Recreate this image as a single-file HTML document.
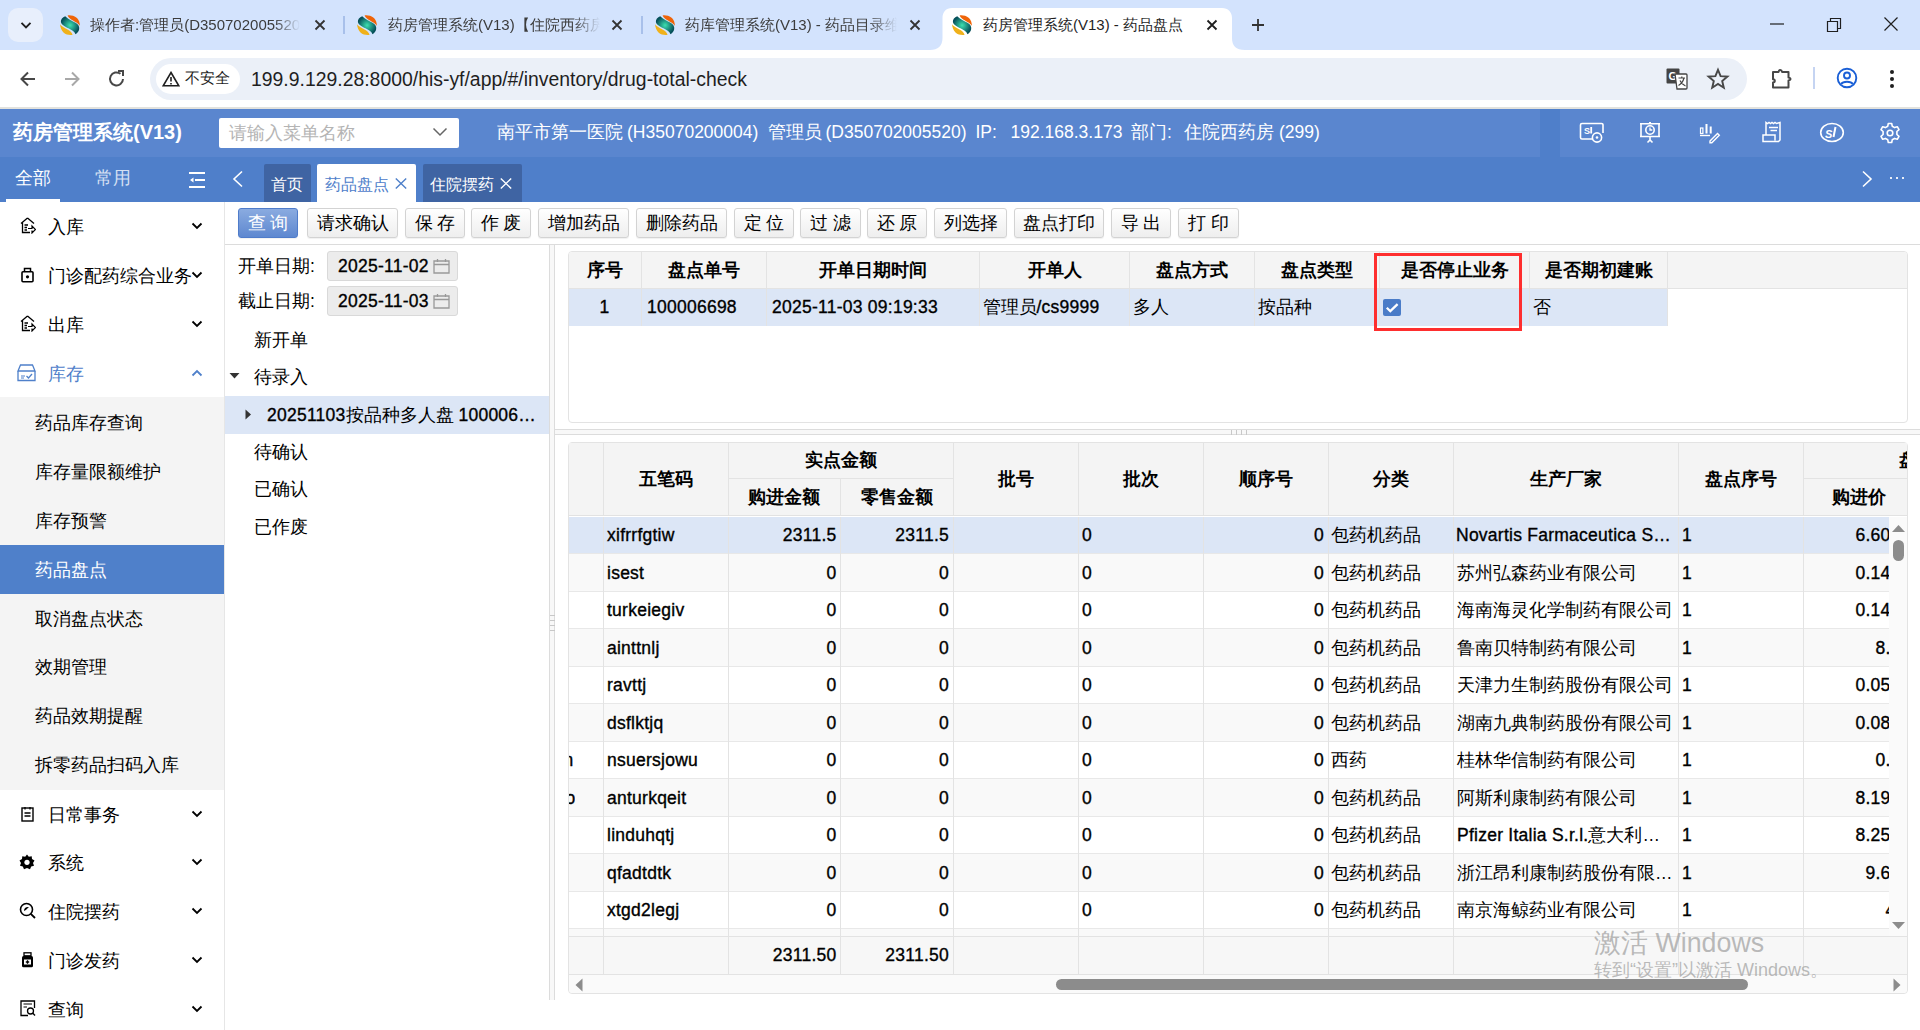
<!DOCTYPE html>
<html><head><meta charset="utf-8">
<style>
*{box-sizing:border-box;margin:0;padding:0}
html,body{width:1920px;height:1030px;overflow:hidden;background:#fff;font-family:"Liberation Sans",sans-serif;color:#000}
.abs{position:absolute}
/* chrome */
#tabstrip{left:0;top:0;width:1920px;height:50px;background:#d3e3fd}
#toolbar{left:0;top:50px;width:1920px;height:57px;background:#fff}
#tbline{left:0;top:107px;width:1920px;height:2px;background:#e2e2de}
#omni{left:150px;top:58px;width:1597px;height:42px;border-radius:21px;background:#ebf0f8}
/* app header */
#apphdr{left:0;top:109px;width:1920px;height:48px;background:#5a86cf}
#navstrip{left:0;top:157px;width:1920px;height:45px;background:#4f7fca}
#sidebar{left:0;top:202px;width:225px;height:828px;background:#fff;border-right:1px solid #e6e6e6}
#main{left:225px;top:202px;width:1695px;height:828px;background:#fff}

.ctab{position:absolute;top:15px;height:20px;font-size:15px;line-height:20px;color:#3c3c3c;white-space:nowrap;overflow:hidden;-webkit-mask-image:linear-gradient(90deg,#000 calc(100% - 26px),transparent 100%)}

.ntab{position:absolute;top:164px;height:38px;font-size:16.25px;line-height:40px;padding-left:7px;white-space:nowrap;border-radius:2px 2px 0 0}
.nx{font-size:19px;margin-left:2px}

.smi{position:absolute;margin-top:1px;left:48px;font-size:17.5px;line-height:22px;white-space:nowrap}
.ssub{position:absolute;margin-top:1px;left:35px;font-size:17.5px;line-height:22px;white-space:nowrap}

.btn{position:absolute;top:208px;height:30px;border:1px solid #d3d3d3;border-radius:3px;background:linear-gradient(#fff,#eeeeee);font-size:17.5px;line-height:28px;text-align:center;color:#000;white-space:pre;box-shadow:0 1px 1px rgba(0,0,0,0.06)}
.btn.pri{background:linear-gradient(#8aabe0,#5e88d0);border-color:#4f7cca;color:#fff}
.lbl{position:absolute;font-size:17.5px;line-height:22px;white-space:nowrap}
.dbox{position:absolute;left:327px;width:131px;height:30px;background:#ececec;border:1px solid #d9d9d9;border-radius:3px;font-size:17.5px;line-height:28px;padding-left:10px;white-space:nowrap}
.tr{position:absolute;font-size:17.5px;line-height:22px;white-space:nowrap}

.th{position:absolute;font-size:17.5px;font-weight:bold;text-align:center;white-space:nowrap;overflow:hidden}
.td{position:absolute;font-size:17.5px;white-space:nowrap;overflow:hidden;padding:0 4px}
.hdt{position:absolute;top:121px;font-size:17.5px;line-height:22px;color:#fff;white-space:nowrap}

.b{-webkit-text-stroke:0.35px currentColor;letter-spacing:0.25px}
</style></head><body>
<div id="tabstrip" class="abs"></div>
<div id="toolbar" class="abs"></div>
<div id="omni" class="abs"></div>
<div id="tbline" class="abs"></div>
<svg width="0" height="0" style="position:absolute">
<defs>
<radialGradient id="fg" cx="0.5" cy="0.5" r="0.5"><stop offset="0" stop-color="#3de0b0"/><stop offset="1" stop-color="#06505a"/></radialGradient>
<symbol id="fav" viewBox="0 0 20 20">
<path d="M5.2 1.3 C8 4.5 12.5 6 15.5 7.8 C18.3 9.5 19.6 11.5 19.2 14 C18.8 16.5 17.5 18 15.5 19.3 C14.5 16.5 11.5 14.8 8.5 13.3 C5 11.5 1.5 10 0.9 7 C0.6 4.5 2.5 2.5 5.2 1.3Z" fill="url(#fg)"/>
<path d="M7.6 0.4 C10 0 14 0.5 17 3 C19 5 19.9 8 19.9 10.8 C18.5 8.5 15.5 7 13 5.5 C10.5 4 8.5 2.5 7.6 0.4Z" fill="#ef6408"/>
<path d="M0.1 9.3 C1.5 11.5 4.5 13 7.5 14.5 C10 15.8 12 17.5 12.6 19.8 C10 20.3 6 19.8 3.5 17.5 C1.5 15.5 0.2 12.5 0.1 9.3Z" fill="#f0b11a"/>
</symbol>
</defs></svg>
<div class="abs" style="left:8px;top:8px;width:35px;height:34px;border-radius:10px;background:#e8effc"></div>
<svg class="abs" style="left:19px;top:18px" width="14" height="14" viewBox="0 0 14 14"><path d="M2.5 4.8 L7 9.3 L11.5 4.8" fill="none" stroke="#1f1f1f" stroke-width="1.9"/></svg>
<svg class="abs" style="left:60px;top:15px" width="20" height="20"><use href="#fav"/></svg>
<div class="abs ctab" style="left:90px;width:210px">操作者:管理员(D350702005520)</div>
<svg class="abs" style="left:314px;top:19px" width="12" height="12" viewBox="0 0 12 12"><path d="M1.5 1.5 L10.5 10.5 M10.5 1.5 L1.5 10.5" stroke="#333" stroke-width="1.8"/></svg>
<div class="abs" style="left:343px;top:16px;width:2px;height:18px;background:#a8c0ea"></div>
<svg class="abs" style="left:357px;top:15px" width="20" height="20"><use href="#fav"/></svg>
<div class="abs ctab" style="left:388px;width:212px">药房管理系统(V13)【住院西药房】</div>
<svg class="abs" style="left:611px;top:19px" width="12" height="12" viewBox="0 0 12 12"><path d="M1.5 1.5 L10.5 10.5 M10.5 1.5 L1.5 10.5" stroke="#333" stroke-width="1.8"/></svg>
<div class="abs" style="left:641px;top:16px;width:2px;height:18px;background:#a8c0ea"></div>
<svg class="abs" style="left:655px;top:15px" width="20" height="20"><use href="#fav"/></svg>
<div class="abs ctab" style="left:685px;width:212px">药库管理系统(V13) - 药品目录维护</div>
<svg class="abs" style="left:909px;top:19px" width="12" height="12" viewBox="0 0 12 12"><path d="M1.5 1.5 L10.5 10.5 M10.5 1.5 L1.5 10.5" stroke="#333" stroke-width="1.8"/></svg>
<svg class="abs" style="left:930px;top:8px" width="315" height="43" viewBox="0 0 315 43"><path d="M0 42 C8 42 12.5 38 12.5 30 L12.5 10 C12.5 4 16 0 22 0 L292 0 C298 0 302 4 302 10 L302 30 C302 38 306 42 315 42 L315 43 L0 43Z" fill="#fff"/></svg>
<svg class="abs" style="left:952px;top:15px" width="20" height="20"><use href="#fav"/></svg>
<div class="abs ctab" style="left:983px;width:215px;color:#1f1f1f;-webkit-mask-image:none">药房管理系统(V13) - 药品盘点</div>
<svg class="abs" style="left:1206px;top:19px" width="12" height="12" viewBox="0 0 12 12"><path d="M1.5 1.5 L10.5 10.5 M10.5 1.5 L1.5 10.5" stroke="#1f1f1f" stroke-width="1.8"/></svg>
<svg class="abs" style="left:1251px;top:18px" width="14" height="14" viewBox="0 0 14 14"><path d="M7 1 V13 M1 7 H13" stroke="#333" stroke-width="1.8"/></svg>
<svg class="abs" style="left:1769px;top:16px" width="16" height="16" viewBox="0 0 16 16"><path d="M1 8 H15" stroke="#1f1f1f" stroke-width="1.2"/></svg>
<svg class="abs" style="left:1826px;top:17px" width="16" height="16" viewBox="0 0 16 16"><path d="M1.5 4.5 H11.5 V14.5 H1.5Z M4.5 4.5 V1.5 H14.5 V11.5 H11.5" fill="none" stroke="#1f1f1f" stroke-width="1.2"/></svg>
<svg class="abs" style="left:1883px;top:16px" width="16" height="16" viewBox="0 0 16 16"><path d="M1.5 1.5 L14.5 14.5 M14.5 1.5 L1.5 14.5" stroke="#1f1f1f" stroke-width="1.2"/></svg>
<!-- toolbar -->
<svg class="abs" style="left:18px;top:69px" width="20" height="20" viewBox="0 0 20 20"><path d="M17 10 H4 M10 3.5 L3.5 10 L10 16.5" fill="none" stroke="#474747" stroke-width="2"/></svg>
<svg class="abs" style="left:62px;top:69px" width="20" height="20" viewBox="0 0 20 20"><path d="M3 10 H16 M10 3.5 L16.5 10 L10 16.5" fill="none" stroke="#a8a8a8" stroke-width="2"/></svg>
<svg class="abs" style="left:107px;top:69px" width="20" height="20" viewBox="0 0 20 20"><path d="M16 10 A6.5 6.5 0 1 1 13.5 4.8" fill="none" stroke="#474747" stroke-width="2"/><path d="M11 2 H16 V7" fill="none" stroke="#474747" stroke-width="2"/></svg>
<div class="abs" style="left:156px;top:64px;width:84px;height:30px;border-radius:15px;background:#fff"></div>
<svg class="abs" style="left:162px;top:71px" width="18" height="16" viewBox="0 0 18 16"><path d="M9 1.5 L16.8 14.8 H1.2Z" fill="none" stroke="#1f1f1f" stroke-width="1.6" stroke-linejoin="miter"/><path d="M9 6 V10.5 M9 12 V13.5" stroke="#1f1f1f" stroke-width="1.6"/></svg>
<div class="abs" style="left:185px;top:68px;font-size:15px;line-height:20px;color:#1f1f1f">不安全</div>
<div class="abs" style="left:251px;top:66px;font-size:19.4px;line-height:26px;color:#1f1f1f;letter-spacing:0px">199.9.129.28:8000/his-yf/app/#/inventory/drug-total-check</div>
<svg class="abs" style="left:1665px;top:67px" width="24" height="24" viewBox="0 0 24 24"><rect x="1.5" y="1.5" width="13" height="15" rx="1" fill="#444"/><text x="3.5" y="13" font-size="11" font-weight="bold" fill="#fff" font-family="Liberation Sans">G</text><path d="M10 7 H21 A1 1 0 0 1 22 8 V21 A1 1 0 0 1 21 22 H12 L10 7Z" fill="#fff" stroke="#444" stroke-width="1.3"/><path d="M13.5 11 H20 M16.8 9.5 V11 M19 11 C18 15 16 17 13.5 18.5 M15 13.5 C16 16 18 18 20.5 19" fill="none" stroke="#444" stroke-width="1.2"/></svg>
<svg class="abs" style="left:1706px;top:67px" width="24" height="24" viewBox="0 0 24 24"><path d="M12 2.8 L14.6 9.2 L21.4 9.6 L16.2 14 L17.8 20.7 L12 17 L6.2 20.7 L7.8 14 L2.6 9.6 L9.4 9.2Z" fill="none" stroke="#474747" stroke-width="1.9" stroke-linejoin="miter"/></svg>
<svg class="abs" style="left:1769px;top:66px" width="26" height="24" viewBox="0 0 26 24"><path d="M4 6 H9.5 C9.8 4.6 10.5 4 11.3 4 C12.1 4 12.8 4.6 13.1 6 H19.5 V11.5 C21 11.8 21.6 12.3 21.6 13 C21.6 13.7 21 14.2 19.5 14.5 V21.5 H4 V16.5 C5.2 16.5 5.8 15.8 5.8 14.8 C5.8 13.8 5.2 13.2 4 13.2Z" fill="none" stroke="#474747" stroke-width="2" stroke-linejoin="round"/></svg>
<div class="abs" style="left:1813px;top:67px;width:2px;height:22px;background:#c5d4f2"></div>
<svg class="abs" style="left:1835px;top:66px" width="24" height="24" viewBox="0 0 24 24"><circle cx="12" cy="12" r="9.3" fill="none" stroke="#1a5fd6" stroke-width="1.9"/><circle cx="12" cy="9.5" r="3" fill="none" stroke="#1a5fd6" stroke-width="1.9"/><path d="M6.2 18 C8 15 16 15 17.8 18" fill="none" stroke="#1a5fd6" stroke-width="1.9"/></svg>
<svg class="abs" style="left:1882px;top:67px" width="20" height="24" viewBox="0 0 20 24"><circle cx="10" cy="5" r="2" fill="#1f1f1f"/><circle cx="10" cy="12" r="2" fill="#1f1f1f"/><circle cx="10" cy="19" r="2" fill="#1f1f1f"/></svg>

<div id="apphdr" class="abs"></div>
<div id="navstrip" class="abs"></div>

<div class="abs" style="left:1540px;top:109px;width:20px;height:48px;background:#4f7fca"></div>
<div class="abs" style="left:13px;top:119px;font-size:20px;line-height:26px;font-weight:bold;color:#fff;white-space:nowrap">药房管理系统(V13)</div>
<div class="abs" style="left:219px;top:118px;width:240px;height:30px;background:#fff;border-radius:2px"></div>
<div class="abs" style="left:229px;top:122px;font-size:17.5px;line-height:22px;color:#b4b4b4;white-space:nowrap">请输入菜单名称</div>
<svg class="abs" style="left:432px;top:126px" width="16" height="12" viewBox="0 0 16 12"><path d="M1.5 2.5 L8 9 L14.5 2.5" fill="none" stroke="#666" stroke-width="1.5"/></svg>
<div class="abs hdt" style="left:497px">南平市第一医院</div><div class="abs hdt" style="left:627px">(H35070200004)</div><div class="abs hdt" style="left:767.5px">管理员</div><div class="abs hdt" style="left:825.5px">(D350702005520)</div><div class="abs hdt" style="left:975.5px">IP:</div><div class="abs hdt" style="left:1010.5px">192.168.3.173</div><div class="abs hdt" style="left:1131px">部门</div><div class="abs hdt" style="left:1167px">:</div><div class="abs hdt" style="left:1184px">住院西药房</div><div class="abs hdt" style="left:1279px">(299)</div>

<svg class="abs" style="left:1578px;top:121px" width="28" height="24" viewBox="0 0 28 24"><path d="M16 18 H4 A1.5 1.5 0 0 1 2.5 16.5 V4 A1.5 1.5 0 0 1 4 2.5 H23.5 A1.5 1.5 0 0 1 25 4 V12" fill="none" stroke="#fff" stroke-width="1.6"/><text x="6" y="12.5" font-family="Liberation Sans" font-size="9" font-weight="bold" fill="#fff">S</text><rect x="12.3" y="6" width="1.8" height="6.5" fill="#fff"/><circle cx="19" cy="16.5" r="4.6" fill="#5a86cf" stroke="#fff" stroke-width="1.6"/><circle cx="19" cy="16.5" r="1.3" fill="#fff"/></svg>
<svg class="abs" style="left:1638px;top:121px" width="24" height="24" viewBox="0 0 24 24"><path d="M2 2.8 H22 M3 2.8 V15.5 H21 V2.8 M2 15.5 H22" fill="none" stroke="#fff" stroke-width="1.6"/><rect x="11" y="1" width="2" height="2" fill="#fff"/><circle cx="12" cy="9" r="4.2" fill="none" stroke="#fff" stroke-width="1.6"/><path d="M12 6.5 V9 H14.3" fill="none" stroke="#fff" stroke-width="1.3"/><path d="M12 15.5 V19.5 M9.5 21.5 L12 19 L14.5 21.5" fill="none" stroke="#fff" stroke-width="1.6"/></svg>
<svg class="abs" style="left:1698px;top:121px" width="24" height="24" viewBox="0 0 24 24"><rect x="2.5" y="7" width="2.4" height="5.5" fill="none" stroke="#fff" stroke-width="1.2"/><rect x="7.5" y="3" width="2" height="9.5" fill="#fff"/><rect x="11.7" y="5.5" width="2" height="7" fill="#fff"/><path d="M2 14.5 H12" stroke="#fff" stroke-width="1.4"/><path d="M12 20 L19.5 12.5 L21.3 14.3 L13.8 21.8 H12Z" fill="none" stroke="#fff" stroke-width="1.4"/></svg>
<svg class="abs" style="left:1759px;top:120px" width="24" height="24" viewBox="0 0 24 24"><path d="M7 15 V2.5 L8.5 3.5 L10 2.5 L11.5 3.5 L13 2.5 L14.5 3.5 L16 2.5 L17.5 3.5 L21 2.5 V20 L19.5 21.5 H4 V15 H16 V20.5" fill="none" stroke="#fff" stroke-width="1.5"/><path d="M10 7.5 H19 M11.5 10.5 H18" stroke="#fff" stroke-width="1.6"/></svg>
<svg class="abs" style="left:1819px;top:121px" width="26" height="24" viewBox="0 0 26 24"><ellipse cx="13" cy="11.5" rx="11.3" ry="9" fill="none" stroke="#fff" stroke-width="1.6"/><text x="6" y="16.5" font-family="Liberation Sans" font-size="11" font-weight="bold" font-style="italic" fill="#fff">S</text><path d="M16.5 6 L14.5 16" stroke="#fff" stroke-width="2"/></svg>
<svg class="abs" style="left:1879px;top:122px" width="22" height="22" viewBox="0 0 22 22"><path d="M9.3 1.5 H12.7 L13.3 4.3 L15.6 5.6 L18.3 4.7 L20 7.6 L17.9 9.5 V12.5 L20 14.4 L18.3 17.3 L15.6 16.4 L13.3 17.7 L12.7 20.5 H9.3 L8.7 17.7 L6.4 16.4 L3.7 17.3 L2 14.4 L4.1 12.5 V9.5 L2 7.6 L3.7 4.7 L6.4 5.6 L8.7 4.3Z" fill="none" stroke="#fff" stroke-width="1.6" stroke-linejoin="round"/><circle cx="11" cy="11" r="2.8" fill="none" stroke="#fff" stroke-width="1.6"/></svg>
<!-- nav strip -->
<div class="abs" style="left:15px;top:167px;font-size:17.5px;line-height:22px;color:#fff">全部</div>
<div class="abs" style="left:95px;top:167px;font-size:17.5px;line-height:22px;color:#d5e0f3">常用</div>
<div class="abs" style="left:6px;top:199px;width:54px;height:3px;background:#fff"></div>
<svg class="abs" style="left:189px;top:172px" width="16" height="16" viewBox="0 0 16 16"><path d="M0 1 H16 M6 8 H16 M0 15 H16" stroke="#fff" stroke-width="2"/><path d="M1 8 L4.5 5.5 V10.5Z" fill="#fff"/></svg>
<svg class="abs" style="left:232px;top:170px" width="12" height="18" viewBox="0 0 12 18"><path d="M10 1.5 L2 9 L10 16.5" fill="none" stroke="#fff" stroke-width="1.6"/></svg>
<div class="abs ntab" style="left:264px;width:47px;background:#3f64a3;color:#fff;padding-left:7px">首页</div>
<div class="abs ntab" style="left:317px;width:99px;background:#fff;color:#4f80ca;padding-left:8px">药品盘点</div><svg class="abs" style="left:395px;top:178px" width="12" height="11" viewBox="0 0 12 11"><path d="M0.8 0.5 L11.2 10.5 M11.2 0.5 L0.8 10.5" stroke="#4f80ca" stroke-width="1.4"/></svg>
<div class="abs ntab" style="left:423px;width:99px;background:#3f64a3;color:#fff;padding-left:7px">住院摆药</div><svg class="abs" style="left:500px;top:178px" width="12" height="11" viewBox="0 0 12 11"><path d="M0.8 0.5 L11.2 10.5 M11.2 0.5 L0.8 10.5" stroke="#fff" stroke-width="1.4"/></svg>
<svg class="abs" style="left:1861px;top:170px" width="12" height="18" viewBox="0 0 12 18"><path d="M2 1.5 L10 9 L2 16.5" fill="none" stroke="#fff" stroke-width="1.6"/></svg>
<div class="abs" style="left:1890px;top:177px;width:2px;height:2px;background:#e8eef8"></div>
<div class="abs" style="left:1896px;top:177px;width:2px;height:2px;background:#e8eef8"></div>
<div class="abs" style="left:1902px;top:177px;width:2px;height:2px;background:#e8eef8"></div>
<div id="sidebar" class="abs"></div>
<div id="main" class="abs"></div><div class="abs smi" style="top:215px;color:#000">入库</div><svg class="abs" style="left:19px;top:217px" width="17" height="17" viewBox="0 0 17 17"><path d="M8.5 1 L15 6.5 M8.5 1 L2 6.5 M3.5 5.5 V15.5 H11 M5.5 8 H9 M5.5 10.5 H8 M5.5 13 H8" fill="none" stroke="#000" stroke-width="1.3"/><path d="M9 11.5 H13 V9 L16.5 12.5 L13 16 V13.5" fill="none" stroke="#000" stroke-width="1.2"/></svg><svg class="abs" style="left:191px;top:222px" width="12" height="8" viewBox="0 0 12 8"><path d="M1.5 1.5 L6 6 L10.5 1.5" fill="none" stroke="#000" stroke-width="1.8"/></svg><div class="abs smi" style="top:264px;color:#000">门诊配药综合业务</div><svg class="abs" style="left:20px;top:267px" width="15" height="16" viewBox="0 0 15 16"><path d="M4.5 4.5 V1.5 H10.5 V4.5" fill="none" stroke="#000" stroke-width="1.5"/><rect x="2" y="4.8" width="11" height="10" rx="1" fill="none" stroke="#000" stroke-width="1.6"/><circle cx="7.5" cy="9.8" r="1.6" fill="#000"/></svg><svg class="abs" style="left:191px;top:271px" width="12" height="8" viewBox="0 0 12 8"><path d="M1.5 1.5 L6 6 L10.5 1.5" fill="none" stroke="#000" stroke-width="1.8"/></svg><div class="abs smi" style="top:313px;color:#000">出库</div><svg class="abs" style="left:19px;top:315px" width="17" height="17" viewBox="0 0 17 17"><path d="M8.5 1 L15 6.5 M8.5 1 L2 6.5 M3.5 5.5 V15.5 H11 M5.5 8 H9 M5.5 10.5 H8 M5.5 13 H8" fill="none" stroke="#000" stroke-width="1.3"/><path d="M9 11.5 H13 V9 L16.5 12.5 L13 16 V13.5" fill="none" stroke="#000" stroke-width="1.2"/></svg><svg class="abs" style="left:191px;top:320px" width="12" height="8" viewBox="0 0 12 8"><path d="M1.5 1.5 L6 6 L10.5 1.5" fill="none" stroke="#000" stroke-width="1.8"/></svg><div class="abs smi" style="top:362px;color:#4f80ca">库存</div><svg class="abs" style="left:17px;top:364px" width="19" height="18" viewBox="0 0 19 18"><path d="M1 7 V16.5 H18 V7 M1 7 L3.5 1 H15.5 L18 7 Z" fill="none" stroke="#4f80ca" stroke-width="1.3"/><path d="M4 12 H8 M4 14 H7" stroke="#4f80ca" stroke-width="1"/><path d="M9.5 12 L11.5 14 L15 10" fill="none" stroke="#4f80ca" stroke-width="1.3"/></svg><svg class="abs" style="left:191px;top:369px" width="12" height="8" viewBox="0 0 12 8"><path d="M1.5 6.5 L6 2 L10.5 6.5" fill="none" stroke="#4f80ca" stroke-width="1.8"/></svg><div class="abs" style="left:0;top:397px;width:224px;height:393px;background:#f4f4f4"></div><div class="abs" style="left:0;top:545px;width:224px;height:49px;background:#4f80ca"></div><div class="abs ssub" style="top:411px;color:#000">药品库存查询</div><div class="abs ssub" style="top:460px;color:#000">库存量限额维护</div><div class="abs ssub" style="top:509px;color:#000">库存预警</div><div class="abs ssub" style="top:558px;color:#fff">药品盘点</div><div class="abs ssub" style="top:607px;color:#000">取消盘点状态</div><div class="abs ssub" style="top:655px;color:#000">效期管理</div><div class="abs ssub" style="top:704px;color:#000">药品效期提醒</div><div class="abs ssub" style="top:753px;color:#000">拆零药品扫码入库</div><div class="abs smi" style="top:803px;color:#000">日常事务</div><svg class="abs" style="left:21px;top:806px" width="13" height="16" viewBox="0 0 13 16"><rect x="1" y="2" width="11" height="13" fill="none" stroke="#000" stroke-width="1.4"/><path d="M4 1 V3.5 M9 1 V3.5 M3.5 7 H9.5 M3.5 10 H9.5" stroke="#000" stroke-width="1.3"/></svg><svg class="abs" style="left:191px;top:810px" width="12" height="8" viewBox="0 0 12 8"><path d="M1.5 1.5 L6 6 L10.5 1.5" fill="none" stroke="#000" stroke-width="1.8"/></svg><div class="abs smi" style="top:851px;color:#000">系统</div><svg class="abs" style="left:19px;top:854px" width="16" height="16" viewBox="0 0 16 16"><path d="M8 0.5 L9.8 2.8 L12.7 2.2 L13 5.1 L15.5 6.6 L14 9 L15 11.8 L12.2 12.5 L11 15.2 L8 14 L5 15.2 L3.8 12.5 L1 11.8 L2 9 L0.5 6.6 L3 5.1 L3.3 2.2 L6.2 2.8Z" fill="#000"/><circle cx="8" cy="8.3" r="2.6" fill="#fff"/></svg><svg class="abs" style="left:191px;top:858px" width="12" height="8" viewBox="0 0 12 8"><path d="M1.5 1.5 L6 6 L10.5 1.5" fill="none" stroke="#000" stroke-width="1.8"/></svg><div class="abs smi" style="top:900px;color:#000">住院摆药</div><svg class="abs" style="left:19px;top:902px" width="17" height="17" viewBox="0 0 17 17"><circle cx="7.5" cy="7.5" r="6" fill="none" stroke="#000" stroke-width="1.6"/><path d="M11.8 11.8 L16 16" stroke="#000" stroke-width="1.8"/><path d="M5 9 C5 6 7 4.5 10 5 C8.5 6.5 7 8 5 9Z" fill="#000"/></svg><svg class="abs" style="left:191px;top:907px" width="12" height="8" viewBox="0 0 12 8"><path d="M1.5 1.5 L6 6 L10.5 1.5" fill="none" stroke="#000" stroke-width="1.8"/></svg><div class="abs smi" style="top:949px;color:#000">门诊发药</div><svg class="abs" style="left:21px;top:952px" width="13" height="16" viewBox="0 0 13 16"><rect x="3" y="0.8" width="7" height="3" fill="none" stroke="#000" stroke-width="1.3"/><rect x="1" y="4" width="11" height="11.3" rx="1.5" fill="#000"/><rect x="3" y="7.5" width="7" height="5" fill="#fff"/><path d="M6.5 8.3 V11.7 M4.8 10 H8.2" stroke="#000" stroke-width="1.3"/></svg><svg class="abs" style="left:191px;top:956px" width="12" height="8" viewBox="0 0 12 8"><path d="M1.5 1.5 L6 6 L10.5 1.5" fill="none" stroke="#000" stroke-width="1.8"/></svg><div class="abs smi" style="top:998px;color:#000">查询</div><svg class="abs" style="left:20px;top:1000px" width="16" height="17" viewBox="0 0 16 17"><path d="M14.5 8 V1 H1 V15.5 H8" fill="none" stroke="#000" stroke-width="1.3"/><path d="M3.5 4 H12 M3.5 7 H7" stroke="#000" stroke-width="1.2"/><circle cx="10.5" cy="11" r="3" fill="none" stroke="#000" stroke-width="1.3"/><path d="M12.6 13.1 L15 15.5" stroke="#000" stroke-width="1.4"/></svg><svg class="abs" style="left:191px;top:1005px" width="12" height="8" viewBox="0 0 12 8"><path d="M1.5 1.5 L6 6 L10.5 1.5" fill="none" stroke="#000" stroke-width="1.8"/></svg>
<div class="abs btn pri" style="left:238px;width:60px">查 询</div><div class="abs btn" style="left:307px;width:91px">请求确认</div><div class="abs btn" style="left:405px;width:60px">保 存</div><div class="abs btn" style="left:471px;width:60px">作 废</div><div class="abs btn" style="left:538px;width:91px">增加药品</div><div class="abs btn" style="left:636px;width:91px">删除药品</div><div class="abs btn" style="left:734px;width:60px">定 位</div><div class="abs btn" style="left:800px;width:61px">过 滤</div><div class="abs btn" style="left:867px;width:60px">还 原</div><div class="abs btn" style="left:934px;width:73px">列选择</div><div class="abs btn" style="left:1014px;width:90px">盘点打印</div><div class="abs btn" style="left:1111px;width:60px">导 出</div><div class="abs btn" style="left:1178px;width:61px">打 印</div><div class="abs" style="left:225px;top:244px;width:1695px;height:1px;background:#dcdcdc"></div><div class="abs lbl" style="left:238px;top:255px">开单日期:</div><div class="abs lbl" style="left:238px;top:290px">截止日期:</div><div class="abs dbox b" style="top:251px">2025-11-02</div><svg class="abs" style="left:433px;top:258px" width="17" height="16" viewBox="0 0 17 16"><path d="M1 3 H16 V15 H1Z M1 6.5 H16 M4.5 1 V4 M12.5 1 V4" fill="none" stroke="#999" stroke-width="1.3"/></svg><div class="abs dbox b" style="top:286px">2025-11-03</div><svg class="abs" style="left:433px;top:293px" width="17" height="16" viewBox="0 0 17 16"><path d="M1 3 H16 V15 H1Z M1 6.5 H16 M4.5 1 V4 M12.5 1 V4" fill="none" stroke="#999" stroke-width="1.3"/></svg><div class="abs" style="left:225px;top:396px;width:324px;height:38px;background:#dce6f6"></div><div class="abs tr" style="left:254px;top:329px">新开单</div><div class="abs tr" style="left:254px;top:366px">待录入</div><div class="abs tr" style="left:254px;top:441px">待确认</div><div class="abs tr" style="left:254px;top:478px">已确认</div><div class="abs tr" style="left:254px;top:516px">已作废</div><svg class="abs" style="left:229px;top:372px" width="11" height="8" viewBox="0 0 11 8"><path d="M0.5 1 H10.5 L5.5 6.5Z" fill="#333"/></svg><svg class="abs" style="left:244px;top:409px" width="8" height="11" viewBox="0 0 8 11"><path d="M1.5 0.5 V10.5 L7 5.5Z" fill="#333"/></svg><div class="abs tr" style="left:267px;top:404px"><span class="b">20251103</span>按品种多人盘 <span class="b">100006…</span></div><div class="abs" style="left:549px;top:245px;width:6px;height:755px;background:#f8f8f8;border-left:1px solid #dcdcdc;border-right:1px solid #dcdcdc"></div>
<div class="abs" style="left:568px;top:251px;width:1340px;height:172px;border:1px solid #e3e3e3;border-radius:4px;background:#fff;overflow:hidden"><div class="abs" style="left:0;top:0;width:1338px;height:37px;background:#f4f4f4;border-bottom:1px solid #e3e3e3"></div><div class="abs th" style="left:-1px;top:0;width:74px;height:37px;line-height:37px;border-right:1px solid #e3e3e3">序号</div><div class="abs th" style="left:73px;top:0;width:125px;height:37px;line-height:37px;border-right:1px solid #e3e3e3">盘点单号</div><div class="abs th" style="left:198px;top:0;width:213px;height:37px;line-height:37px;border-right:1px solid #e3e3e3">开单日期时间</div><div class="abs th" style="left:411px;top:0;width:150px;height:37px;line-height:37px;border-right:1px solid #e3e3e3">开单人</div><div class="abs th" style="left:561px;top:0;width:125px;height:37px;line-height:37px;border-right:1px solid #e3e3e3">盘点方式</div><div class="abs th" style="left:686px;top:0;width:125px;height:37px;line-height:37px;border-right:1px solid #e3e3e3">盘点类型</div><div class="abs th" style="left:811px;top:0;width:150px;height:37px;line-height:37px;border-right:1px solid #e3e3e3">是否停止业务</div><div class="abs th" style="left:961px;top:0;width:138px;height:37px;line-height:37px;border-right:1px solid #e3e3e3">是否期初建账</div><div class="abs" style="left:0;top:37px;width:1099px;height:37px;background:#dce6f6"></div><div class="abs td b" style="left:-1px;top:37px;width:74px;height:37px;line-height:37px;text-align:center;border-right:1px solid #e3e3e3">1</div><div class="abs td b" style="left:73px;top:37px;width:125px;height:37px;line-height:37px;text-align:left;padding-left:5px;border-right:1px solid #e3e3e3">100006698</div><div class="abs td b" style="left:198px;top:37px;width:213px;height:37px;line-height:37px;text-align:left;padding-left:5px;border-right:1px solid #e3e3e3">2025-11-03 09:19:33</div><div class="abs td" style="left:411px;top:37px;width:150px;height:37px;line-height:37px;text-align:left;padding-left:2.5px;border-right:1px solid #e3e3e3">管理员<span class="b">/cs9999</span></div><div class="abs td" style="left:561px;top:37px;width:125px;height:37px;line-height:37px;text-align:left;padding-left:2.5px;border-right:1px solid #e3e3e3">多人</div><div class="abs td" style="left:686px;top:37px;width:125px;height:37px;line-height:37px;text-align:left;padding-left:2.5px;border-right:1px solid #e3e3e3">按品种</div><div class="abs td" style="left:811px;top:37px;width:150px;height:37px;line-height:37px;text-align:;border-right:1px solid #e3e3e3"></div><div class="abs td" style="left:961px;top:37px;width:138px;height:37px;line-height:37px;text-align:left;padding-left:2.5px;border-right:1px solid #e3e3e3">否</div></div><div class="abs" style="left:1383px;top:299px;width:18px;height:17px;border-radius:2px;background:#4a7cc8"></div><svg class="abs" style="left:1383px;top:299px" width="18" height="17" viewBox="0 0 18 17"><path d="M3.8 8.8 L7.3 12.2 L14.6 5.2" fill="none" stroke="#fff" stroke-width="2.3"/></svg><div class="abs" style="left:1374px;top:253px;width:148px;height:78px;border:3px solid #fe2e2e"></div><div class="abs" style="left:555px;top:429px;width:1365px;height:6px;background:#f8f8f8;border-top:1px solid #dcdcdc;border-bottom:1px solid #dcdcdc"></div>
<div class="abs" style="left:568px;top:442px;width:1340px;height:552px;border:1px solid #e3e3e3;border-radius:4px;background:#fff"></div><div class="abs" style="left:0;top:0;width:1920px;height:1030px;clip-path:inset(443px 13px 514px 569px)"><div class="abs" style="left:569px;top:443px;width:1338px;height:73px;background:#f4f4f4"></div><div class="abs" style="left:569px;top:515px;width:1338px;height:2px;background:#e2e2e2"></div><div class="abs" style="left:603px;top:443px;width:1px;height:72px;background:#e3e3e3"></div><div class="abs" style="left:728px;top:443px;width:1px;height:72px;background:#e3e3e3"></div><div class="abs" style="left:840px;top:478px;width:1px;height:37px;background:#e3e3e3"></div><div class="abs" style="left:953px;top:443px;width:1px;height:72px;background:#e3e3e3"></div><div class="abs" style="left:1078px;top:443px;width:1px;height:72px;background:#e3e3e3"></div><div class="abs" style="left:1203px;top:443px;width:1px;height:72px;background:#e3e3e3"></div><div class="abs" style="left:1328px;top:443px;width:1px;height:72px;background:#e3e3e3"></div><div class="abs" style="left:1453px;top:443px;width:1px;height:72px;background:#e3e3e3"></div><div class="abs" style="left:1678px;top:443px;width:1px;height:72px;background:#e3e3e3"></div><div class="abs" style="left:1803px;top:443px;width:1px;height:72px;background:#e3e3e3"></div><div class="abs th" style="left:603px;top:468px;width:125px;line-height:22px">五笔码</div><div class="abs th" style="left:953px;top:468px;width:125px;line-height:22px">批号</div><div class="abs th" style="left:1078px;top:468px;width:125px;line-height:22px">批次</div><div class="abs th" style="left:1203px;top:468px;width:125px;line-height:22px">顺序号</div><div class="abs th" style="left:1328px;top:468px;width:125px;line-height:22px">分类</div><div class="abs th" style="left:1453px;top:468px;width:225px;line-height:22px">生产厂家</div><div class="abs th" style="left:1678px;top:468px;width:125.5px;line-height:22px">盘点序号</div><div class="abs" style="left:728px;top:478px;width:225px;height:1px;background:#e3e3e3"></div><div class="abs th" style="left:728px;top:449px;width:225px;line-height:22px">实点金额</div><div class="abs th" style="left:728px;top:486px;width:112.5px;line-height:22px">购进金额</div><div class="abs th" style="left:840.5px;top:486px;width:112.5px;line-height:22px">零售金额</div><div class="abs" style="left:1803px;top:478px;width:116px;height:1px;background:#e3e3e3"></div><div class="abs th" style="left:1803.5px;top:486px;width:110px;line-height:22px">购进价</div><div class="abs th" style="left:1899px;top:449px;text-align:left;line-height:22px">盘点价格</div></div><div class="abs" style="left:0;top:0;width:1920px;height:1030px;clip-path:inset(517px 31px 94px 569px)"><div class="abs" style="left:569px;top:516.5px;width:1320px;height:37.5px;background:#dce6f6;border-bottom:1px solid #e8e8e8"></div><div class="abs td b" style="left:603px;top:524.0px;line-height:22px">xifrrfgtiw</div><div class="abs td b" style="left:728px;top:524.0px;width:112.5px;line-height:22px;text-align:right">2311.5</div><div class="abs td b" style="left:840.5px;top:524.0px;width:112.5px;line-height:22px;text-align:right">2311.5</div><div class="abs td b" style="left:1078px;top:524.0px;line-height:22px">0</div><div class="abs td b" style="left:1203px;top:524.0px;width:125px;line-height:22px;text-align:right">0</div><div class="abs td" style="left:1328px;top:524.0px;line-height:22px;padding-left:3px">包药机药品</div><div class="abs td b" style="left:1453px;top:524.0px;width:225px;line-height:22px;padding-left:3px">Novartis Farmaceutica S…</div><div class="abs td b" style="left:1678px;top:524.0px;line-height:22px">1</div><div class="abs td b" style="left:1803.5px;top:524.0px;width:110px;line-height:22px;text-align:right;padding-right:3px">6.6000</div><div class="abs" style="left:569px;top:554.0px;width:1320px;height:37.5px;background:#f9f9f9;border-bottom:1px solid #e8e8e8"></div><div class="abs td b" style="left:603px;top:561.5px;line-height:22px">isest</div><div class="abs td b" style="left:728px;top:561.5px;width:112.5px;line-height:22px;text-align:right">0</div><div class="abs td b" style="left:840.5px;top:561.5px;width:112.5px;line-height:22px;text-align:right">0</div><div class="abs td b" style="left:1078px;top:561.5px;line-height:22px">0</div><div class="abs td b" style="left:1203px;top:561.5px;width:125px;line-height:22px;text-align:right">0</div><div class="abs td" style="left:1328px;top:561.5px;line-height:22px;padding-left:3px">包药机药品</div><div class="abs td" style="left:1454px;top:561.5px;width:225px;line-height:22px;padding-left:3px">苏州弘森药业有限公司</div><div class="abs td b" style="left:1678px;top:561.5px;line-height:22px">1</div><div class="abs td b" style="left:1803.5px;top:561.5px;width:110px;line-height:22px;text-align:right;padding-right:3px">0.1400</div><div class="abs" style="left:569px;top:591.5px;width:1320px;height:37.5px;background:#fff;border-bottom:1px solid #e8e8e8"></div><div class="abs td b" style="left:603px;top:599.0px;line-height:22px">turkeiegiv</div><div class="abs td b" style="left:728px;top:599.0px;width:112.5px;line-height:22px;text-align:right">0</div><div class="abs td b" style="left:840.5px;top:599.0px;width:112.5px;line-height:22px;text-align:right">0</div><div class="abs td b" style="left:1078px;top:599.0px;line-height:22px">0</div><div class="abs td b" style="left:1203px;top:599.0px;width:125px;line-height:22px;text-align:right">0</div><div class="abs td" style="left:1328px;top:599.0px;line-height:22px;padding-left:3px">包药机药品</div><div class="abs td" style="left:1454px;top:599.0px;width:225px;line-height:22px;padding-left:3px">海南海灵化学制药有限公司</div><div class="abs td b" style="left:1678px;top:599.0px;line-height:22px">1</div><div class="abs td b" style="left:1803.5px;top:599.0px;width:110px;line-height:22px;text-align:right;padding-right:3px">0.1400</div><div class="abs" style="left:569px;top:629.0px;width:1320px;height:37.5px;background:#f9f9f9;border-bottom:1px solid #e8e8e8"></div><div class="abs td b" style="left:603px;top:636.5px;line-height:22px">ainttnlj</div><div class="abs td b" style="left:728px;top:636.5px;width:112.5px;line-height:22px;text-align:right">0</div><div class="abs td b" style="left:840.5px;top:636.5px;width:112.5px;line-height:22px;text-align:right">0</div><div class="abs td b" style="left:1078px;top:636.5px;line-height:22px">0</div><div class="abs td b" style="left:1203px;top:636.5px;width:125px;line-height:22px;text-align:right">0</div><div class="abs td" style="left:1328px;top:636.5px;line-height:22px;padding-left:3px">包药机药品</div><div class="abs td" style="left:1454px;top:636.5px;width:225px;line-height:22px;padding-left:3px">鲁南贝特制药有限公司</div><div class="abs td b" style="left:1678px;top:636.5px;line-height:22px">1</div><div class="abs td b" style="left:1803.5px;top:636.5px;width:110px;line-height:22px;text-align:right;padding-right:3px">8.50</div><div class="abs" style="left:569px;top:666.5px;width:1320px;height:37.5px;background:#fff;border-bottom:1px solid #e8e8e8"></div><div class="abs td b" style="left:603px;top:674.0px;line-height:22px">ravttj</div><div class="abs td b" style="left:728px;top:674.0px;width:112.5px;line-height:22px;text-align:right">0</div><div class="abs td b" style="left:840.5px;top:674.0px;width:112.5px;line-height:22px;text-align:right">0</div><div class="abs td b" style="left:1078px;top:674.0px;line-height:22px">0</div><div class="abs td b" style="left:1203px;top:674.0px;width:125px;line-height:22px;text-align:right">0</div><div class="abs td" style="left:1328px;top:674.0px;line-height:22px;padding-left:3px">包药机药品</div><div class="abs td" style="left:1454px;top:674.0px;width:225px;line-height:22px;padding-left:3px">天津力生制药股份有限公司</div><div class="abs td b" style="left:1678px;top:674.0px;line-height:22px">1</div><div class="abs td b" style="left:1803.5px;top:674.0px;width:110px;line-height:22px;text-align:right;padding-right:3px">0.0500</div><div class="abs" style="left:569px;top:704.0px;width:1320px;height:37.5px;background:#f9f9f9;border-bottom:1px solid #e8e8e8"></div><div class="abs td b" style="left:603px;top:711.5px;line-height:22px">dsflktjq</div><div class="abs td b" style="left:728px;top:711.5px;width:112.5px;line-height:22px;text-align:right">0</div><div class="abs td b" style="left:840.5px;top:711.5px;width:112.5px;line-height:22px;text-align:right">0</div><div class="abs td b" style="left:1078px;top:711.5px;line-height:22px">0</div><div class="abs td b" style="left:1203px;top:711.5px;width:125px;line-height:22px;text-align:right">0</div><div class="abs td" style="left:1328px;top:711.5px;line-height:22px;padding-left:3px">包药机药品</div><div class="abs td" style="left:1454px;top:711.5px;width:225px;line-height:22px;padding-left:3px">湖南九典制药股份有限公司</div><div class="abs td b" style="left:1678px;top:711.5px;line-height:22px">1</div><div class="abs td b" style="left:1803.5px;top:711.5px;width:110px;line-height:22px;text-align:right;padding-right:3px">0.0800</div><div class="abs" style="left:569px;top:741.5px;width:1320px;height:37.5px;background:#fff;border-bottom:1px solid #e8e8e8"></div><div class="abs td b" style="left:563.5px;top:749.0px;line-height:22px;padding:0">n</div><div class="abs td b" style="left:603px;top:749.0px;line-height:22px">nsuersjowu</div><div class="abs td b" style="left:728px;top:749.0px;width:112.5px;line-height:22px;text-align:right">0</div><div class="abs td b" style="left:840.5px;top:749.0px;width:112.5px;line-height:22px;text-align:right">0</div><div class="abs td b" style="left:1078px;top:749.0px;line-height:22px">0</div><div class="abs td b" style="left:1203px;top:749.0px;width:125px;line-height:22px;text-align:right">0</div><div class="abs td" style="left:1328px;top:749.0px;line-height:22px;padding-left:3px">西药</div><div class="abs td" style="left:1454px;top:749.0px;width:225px;line-height:22px;padding-left:3px">桂林华信制药有限公司</div><div class="abs td b" style="left:1678px;top:749.0px;line-height:22px">1</div><div class="abs td b" style="left:1803.5px;top:749.0px;width:110px;line-height:22px;text-align:right;padding-right:3px">0.50</div><div class="abs" style="left:569px;top:779.0px;width:1320px;height:37.5px;background:#f9f9f9;border-bottom:1px solid #e8e8e8"></div><div class="abs td b" style="left:565.5px;top:786.5px;line-height:22px;padding:0">o</div><div class="abs td b" style="left:603px;top:786.5px;line-height:22px">anturkqeit</div><div class="abs td b" style="left:728px;top:786.5px;width:112.5px;line-height:22px;text-align:right">0</div><div class="abs td b" style="left:840.5px;top:786.5px;width:112.5px;line-height:22px;text-align:right">0</div><div class="abs td b" style="left:1078px;top:786.5px;line-height:22px">0</div><div class="abs td b" style="left:1203px;top:786.5px;width:125px;line-height:22px;text-align:right">0</div><div class="abs td" style="left:1328px;top:786.5px;line-height:22px;padding-left:3px">包药机药品</div><div class="abs td" style="left:1454px;top:786.5px;width:225px;line-height:22px;padding-left:3px">阿斯利康制药有限公司</div><div class="abs td b" style="left:1678px;top:786.5px;line-height:22px">1</div><div class="abs td b" style="left:1803.5px;top:786.5px;width:110px;line-height:22px;text-align:right;padding-right:3px">8.1900</div><div class="abs" style="left:569px;top:816.5px;width:1320px;height:37.5px;background:#fff;border-bottom:1px solid #e8e8e8"></div><div class="abs td b" style="left:603px;top:824.0px;line-height:22px">linduhqtj</div><div class="abs td b" style="left:728px;top:824.0px;width:112.5px;line-height:22px;text-align:right">0</div><div class="abs td b" style="left:840.5px;top:824.0px;width:112.5px;line-height:22px;text-align:right">0</div><div class="abs td b" style="left:1078px;top:824.0px;line-height:22px">0</div><div class="abs td b" style="left:1203px;top:824.0px;width:125px;line-height:22px;text-align:right">0</div><div class="abs td" style="left:1328px;top:824.0px;line-height:22px;padding-left:3px">包药机药品</div><div class="abs td" style="left:1454px;top:824.0px;width:225px;line-height:22px;padding-left:3px"><span class="b">Pfizer Italia S.r.l.</span>意大利…</div><div class="abs td b" style="left:1678px;top:824.0px;line-height:22px">1</div><div class="abs td b" style="left:1803.5px;top:824.0px;width:110px;line-height:22px;text-align:right;padding-right:3px">8.2500</div><div class="abs" style="left:569px;top:854.0px;width:1320px;height:37.5px;background:#f9f9f9;border-bottom:1px solid #e8e8e8"></div><div class="abs td b" style="left:603px;top:861.5px;line-height:22px">qfadtdtk</div><div class="abs td b" style="left:728px;top:861.5px;width:112.5px;line-height:22px;text-align:right">0</div><div class="abs td b" style="left:840.5px;top:861.5px;width:112.5px;line-height:22px;text-align:right">0</div><div class="abs td b" style="left:1078px;top:861.5px;line-height:22px">0</div><div class="abs td b" style="left:1203px;top:861.5px;width:125px;line-height:22px;text-align:right">0</div><div class="abs td" style="left:1328px;top:861.5px;line-height:22px;padding-left:3px">包药机药品</div><div class="abs td" style="left:1454px;top:861.5px;width:225px;line-height:22px;padding-left:3px">浙江昂利康制药股份有限…</div><div class="abs td b" style="left:1678px;top:861.5px;line-height:22px">1</div><div class="abs td b" style="left:1803.5px;top:861.5px;width:110px;line-height:22px;text-align:right;padding-right:3px">9.650</div><div class="abs" style="left:569px;top:891.5px;width:1320px;height:37.5px;background:#fff;border-bottom:1px solid #e8e8e8"></div><div class="abs td b" style="left:603px;top:899.0px;line-height:22px">xtgd2legj</div><div class="abs td b" style="left:728px;top:899.0px;width:112.5px;line-height:22px;text-align:right">0</div><div class="abs td b" style="left:840.5px;top:899.0px;width:112.5px;line-height:22px;text-align:right">0</div><div class="abs td b" style="left:1078px;top:899.0px;line-height:22px">0</div><div class="abs td b" style="left:1203px;top:899.0px;width:125px;line-height:22px;text-align:right">0</div><div class="abs td" style="left:1328px;top:899.0px;line-height:22px;padding-left:3px">包药机药品</div><div class="abs td" style="left:1454px;top:899.0px;width:225px;line-height:22px;padding-left:3px">南京海鲸药业有限公司</div><div class="abs td b" style="left:1678px;top:899.0px;line-height:22px">1</div><div class="abs td b" style="left:1803.5px;top:899.0px;width:110px;line-height:22px;text-align:right;padding-right:3px">4.5</div><div class="abs" style="left:569px;top:929.0px;width:1320px;height:37.5px;background:#f9f9f9;border-bottom:1px solid #e8e8e8"></div><div class="abs" style="left:603px;top:516px;width:1px;height:420px;background:#e3e3e3"></div><div class="abs" style="left:728px;top:516px;width:1px;height:420px;background:#e3e3e3"></div><div class="abs" style="left:840px;top:516px;width:1px;height:420px;background:#e3e3e3"></div><div class="abs" style="left:953px;top:516px;width:1px;height:420px;background:#e3e3e3"></div><div class="abs" style="left:1078px;top:516px;width:1px;height:420px;background:#e3e3e3"></div><div class="abs" style="left:1203px;top:516px;width:1px;height:420px;background:#e3e3e3"></div><div class="abs" style="left:1328px;top:516px;width:1px;height:420px;background:#e3e3e3"></div><div class="abs" style="left:1453px;top:516px;width:1px;height:420px;background:#e3e3e3"></div><div class="abs" style="left:1678px;top:516px;width:1px;height:420px;background:#e3e3e3"></div><div class="abs" style="left:1803px;top:516px;width:1px;height:420px;background:#e3e3e3"></div></div><div class="abs" style="left:0;top:0;width:1920px;height:1030px;clip-path:inset(936px 13px 55px 569px)"><div class="abs" style="left:569px;top:936px;width:1338px;height:39px;background:#f7f7f7;border-top:1px solid #e3e3e3;border-bottom:1px solid #e3e3e3"></div><div class="abs" style="left:603px;top:936px;width:1px;height:38px;background:#e3e3e3"></div><div class="abs" style="left:728px;top:936px;width:1px;height:38px;background:#e3e3e3"></div><div class="abs" style="left:840px;top:936px;width:1px;height:38px;background:#e3e3e3"></div><div class="abs" style="left:953px;top:936px;width:1px;height:38px;background:#e3e3e3"></div><div class="abs" style="left:1078px;top:936px;width:1px;height:38px;background:#e3e3e3"></div><div class="abs" style="left:1203px;top:936px;width:1px;height:38px;background:#e3e3e3"></div><div class="abs" style="left:1328px;top:936px;width:1px;height:38px;background:#e3e3e3"></div><div class="abs" style="left:1453px;top:936px;width:1px;height:38px;background:#e3e3e3"></div><div class="abs" style="left:1678px;top:936px;width:1px;height:38px;background:#e3e3e3"></div><div class="abs" style="left:1803px;top:936px;width:1px;height:38px;background:#e3e3e3"></div><div class="abs td b" style="left:728px;top:944px;width:112.5px;line-height:22px;text-align:right">2311.50</div><div class="abs td b" style="left:840.5px;top:944px;width:112.5px;line-height:22px;text-align:right">2311.50</div></div><div class="abs" style="left:1889px;top:517px;width:18px;height:419px;background:#fafafa"></div><svg class="abs" style="left:1892px;top:524px" width="14" height="9" viewBox="0 0 14 9"><path d="M0 8 L6.5 1 L13 8Z" fill="#8c8c8c"/></svg><div class="abs" style="left:1893px;top:540px;width:11px;height:21px;border-radius:6px;background:#8c8c8c"></div><svg class="abs" style="left:1892px;top:921px" width="14" height="9" viewBox="0 0 14 9"><path d="M0 1 L6.5 8 L13 1Z" fill="#8c8c8c"/></svg><div class="abs" style="left:569px;top:975px;width:1338px;height:18px;background:#fafafa;border-radius:0 0 4px 4px"></div><svg class="abs" style="left:575px;top:978px" width="8" height="14" viewBox="0 0 8 14"><path d="M7.5 0.5 V13.5 L0.5 7Z" fill="#8c8c8c"/></svg><svg class="abs" style="left:1893px;top:978px" width="8" height="14" viewBox="0 0 8 14"><path d="M0.5 0.5 V13.5 L7.5 7Z" fill="#8c8c8c"/></svg><div class="abs" style="left:1056px;top:979px;width:692px;height:11px;border-radius:6px;background:#8c8c8c"></div><div class="abs" style="left:1594px;top:928px;font-size:26.8px;line-height:30px;color:rgba(160,160,160,0.72);white-space:nowrap">激活 Windows</div><div class="abs" style="left:1594px;top:959px;font-size:18px;line-height:22px;color:rgba(160,160,160,0.72);white-space:nowrap">转到“设置”以激活 Windows。</div>
<div class="abs" style="left:1231px;top:430px;width:1px;height:5px;background:#c8c8c8"></div><div class="abs" style="left:1236px;top:430px;width:1px;height:5px;background:#c8c8c8"></div><div class="abs" style="left:1241px;top:430px;width:1px;height:5px;background:#c8c8c8"></div><div class="abs" style="left:1246px;top:430px;width:1px;height:5px;background:#c8c8c8"></div><div class="abs" style="left:550px;top:615px;width:5px;height:1px;background:#c8c8c8"></div><div class="abs" style="left:550px;top:620px;width:5px;height:1px;background:#c8c8c8"></div><div class="abs" style="left:550px;top:625px;width:5px;height:1px;background:#c8c8c8"></div><div class="abs" style="left:550px;top:630px;width:5px;height:1px;background:#c8c8c8"></div>
</body></html>
